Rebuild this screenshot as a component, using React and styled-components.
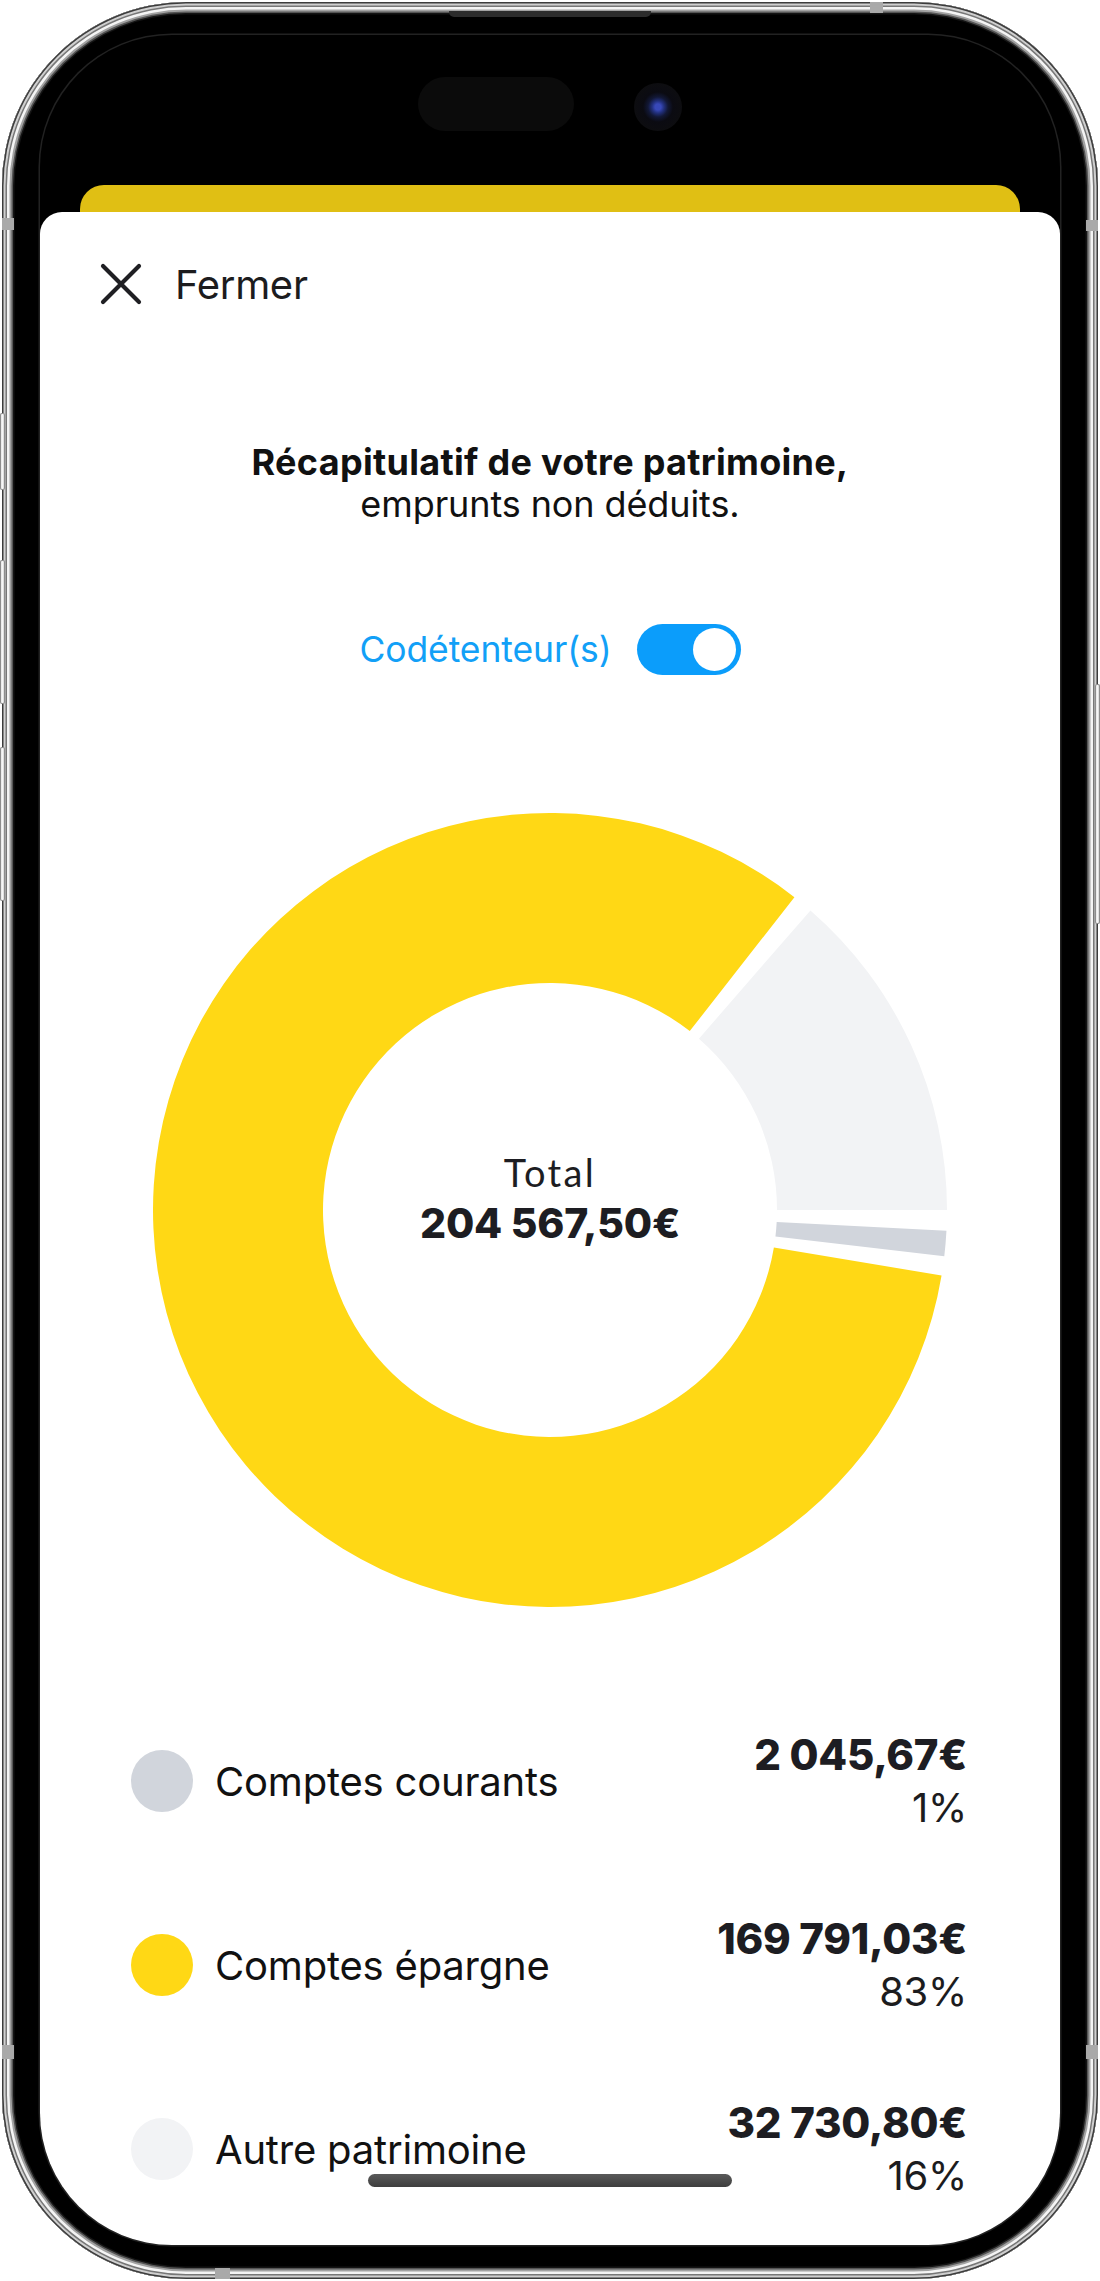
import React from 'react';
import styled, { createGlobalStyle } from 'styled-components';

const GlobalStyle = createGlobalStyle`
  html, body { margin: 0; padding: 0; background: #fff; }
  body { font-family: Inter, "Noto Sans", sans-serif; -webkit-font-smoothing: antialiased; }
  #root { width: 1100px; height: 2281px; }
`;

const Page = styled.div`
  width: 1100px;
  height: 2281px;
  padding: 2px;
  box-sizing: border-box;
  background: #fff;
`;

const Frame = styled.div`
  position: relative;
  width: 1096px;
  height: 2277px;
  box-sizing: border-box;
  border-radius: 184px;
  padding: 33px 38px 34px;
  background: #000;
  box-shadow:
    inset 0 0 0 1.5px #3c3c3c,
    inset 0 0 0 3.5px #cfcfcf,
    inset 0 0 0 5px #777,
    inset 0 0 0 7.5px #f4f4f4,
    inset 0 0 0 9.5px #a2a2a2,
    inset 0 0 0 11px #555,
    inset 0 0 0 12.5px #141414;
`;

const SideButton = styled.div`
  position: absolute;
  ${(p) => (p.$side === 'left' ? 'left: -2px;' : 'right: -2px;')}
  top: ${(p) => p.$top}px;
  width: 5px;
  height: ${(p) => p.$h}px;
  border-radius: 2px;
  background: linear-gradient(90deg, #d9d9d9, #f6f6f6 50%, #bdbdbd);
  box-shadow: inset 0 0 0 1px #8d8d8d;
`;

const AntennaMark = styled.div`
  position: absolute;
  background: #a9a9a9;
  ${(p) => p.$css}
`;

const Speaker = styled.div`
  position: absolute;
  top: 9px;
  left: 447px;
  width: 202px;
  height: 6px;
  border-radius: 0 0 5px 5px;
  background: #2c2c2c;
`;

const Screen = styled.div`
  width: 100%;
  height: 100%;
  border-radius: 132px;
  overflow: hidden;
  background: #000;
  display: flex;
  flex-direction: column;
  box-shadow: 0 0 0 1.5px #222;
`;

const StatusBar = styled.div`
  flex: none;
  height: 150px;
  box-sizing: border-box;
  padding-top: 42px;
  display: flex;
  justify-content: center;
  align-items: flex-start;
  gap: 60px;
`;

const Island = styled.div`
  width: 156px;
  height: 54px;
  border-radius: 27px;
  background: #0b0b0b;
`;

const Camera = styled.div`
  margin-top: 6px;
  width: 48px;
  height: 48px;
  border-radius: 50%;
  background: radial-gradient(circle at 50% 50%, #3848b8 0 3px, #22307e 6px, #121836 10px, #0b0b12 15px, #0d0d10 24px);
`;

const BackCard = styled.div`
  flex: none;
  height: 27px;
  margin: 0 40px;
  border-radius: 24px 24px 0 0;
  background: #e0bf14;
`;

const Sheet = styled.main`
  flex: 1;
  position: relative;
  background: #fff;
  border-radius: 22px 22px 0 0;
  display: flex;
  flex-direction: column;
  color: #1c1c1e;
`;

const Header = styled.header`
  display: flex;
  align-items: center;
  gap: 33px;
  height: 48px;
  margin-top: 48px;
  padding-left: 60px;
`;

const CloseIcon = styled.svg`
  width: 42px;
  height: 42px;
  flex: none;
`;

const CloseLabel = styled.span`
  font-size: 40px;
  letter-spacing: -0.3px;
  color: #1c1c1e;
`;

const Summary = styled.div`
  margin-top: 133px;
  text-align: center;
  font-size: 36px;
  line-height: 42px;
  color: #111;
  letter-spacing: -0.1px;
`;

const SummaryStrong = styled.strong`
  display: block;
  font-weight: 700;
  letter-spacing: 0.3px;
`;

const CoholderRow = styled.div`
  margin-top: 98px;
  height: 52px;
  display: flex;
  justify-content: center;
  align-items: center;
  gap: 25px;
`;

const CoholderLabel = styled.span`
  font-size: 35.5px;
  color: #12a0f7;
  letter-spacing: -0.1px;
`;

const Toggle = styled.div`
  width: 104px;
  height: 51px;
  box-sizing: border-box;
  border-radius: 26px;
  background: #0b9dfb;
  padding: 4px 5px;
  display: flex;
  justify-content: ${(p) => (p.$on ? 'flex-end' : 'flex-start')};
`;

const Knob = styled.div`
  width: 43px;
  height: 43px;
  border-radius: 50%;
  background: #fff;
`;

const ChartWrap = styled.div`
  margin: 138px auto 0;
  width: 794px;
  height: 794px;
  display: grid;
  place-items: center;
`;

const Donut = styled.svg`
  grid-area: 1 / 1;
  width: 794px;
  height: 794px;
`;

const ChartCenter = styled.div`
  grid-area: 1 / 1;
  display: flex;
  flex-direction: column;
  align-items: center;
  margin-bottom: 21px;
  color: #1d1d22;
`;

const TotalLabel = styled.span`
  font-family: Lato, Inter, sans-serif;
  font-size: 38px;
  line-height: 46px;
  letter-spacing: 2.4px;
`;

const TotalValue = styled.span`
  font-size: 41px;
  line-height: 56px;
  font-weight: 800;
  letter-spacing: -0.2px;
`;

const Legend = styled.ul`
  list-style: none;
  margin: 121px 0 0;
  padding: 0 93px 0 91px;
  display: flex;
  flex-direction: column;
  gap: 78px;
`;

const LegendRow = styled.li`
  display: grid;
  grid-template-columns: 62px 1fr auto;
  column-gap: 22px;
  align-items: center;
`;

const Dot = styled.span`
  width: 62px;
  height: 62px;
  border-radius: 50%;
  background: ${(p) => p.$color};
`;

const RowLabel = styled.span`
  font-size: 40px;
  letter-spacing: -0.2px;
  color: #111;
`;

const Figures = styled.div`
  display: flex;
  flex-direction: column;
  align-items: flex-end;
`;

const Amount = styled.span`
  font-weight: 800;
  font-size: 42px;
  line-height: 53px;
  letter-spacing: -0.3px;
  color: #1d1d22;
`;

const Percent = styled.span`
  font-size: 40px;
  line-height: 53px;
  color: #1c1c1e;
  letter-spacing: -0.3px;
`;

const HomeIndicator = styled.div`
  position: absolute;
  left: 50%;
  bottom: 58px;
  width: 364px;
  height: 13px;
  margin-left: -182px;
  border-radius: 7px;
  background: linear-gradient(180deg, #5a5a5a, #3e3e3e);
`;

const CX = 397;
const R_OUT = 397;
const R_IN = 227;

function sectorPath(a0, a1) {
  const rad = (d) => (d * Math.PI) / 180;
  const pt = (rr, a) => [CX + rr * Math.cos(rad(a)), CX - rr * Math.sin(rad(a))];
  const large = a1 - a0 > 180 ? 1 : 0;
  const [x0, y0] = pt(R_OUT, a0);
  const [x1, y1] = pt(R_OUT, a1);
  const [x2, y2] = pt(R_IN, a1);
  const [x3, y3] = pt(R_IN, a0);
  return `M${x0} ${y0} A${R_OUT} ${R_OUT} 0 ${large} 0 ${x1} ${y1} L${x2} ${y2} A${R_IN} ${R_IN} 0 ${large} 1 ${x3} ${y3} Z`;
}

const items = [
  { label: 'Comptes courants', amount: '2 045,67€', percent: '1%', color: '#d1d5dc', from: 353.3, to: 357 },
  { label: 'Comptes épargne', amount: '169 791,03€', percent: '83%', color: '#ffd815', from: 52, to: 350.5 },
  { label: 'Autre patrimoine', amount: '32 730,80€', percent: '16%', color: '#f2f3f5', from: 0, to: 49 },
];

export default function App() {
  return (
    <Page>
      <GlobalStyle />
      <Frame>
        <Speaker />
        <SideButton $side="left" $top={411} $h={77} />
        <SideButton $side="left" $top={558} $h={144} />
        <SideButton $side="left" $top={745} $h={154} />
        <SideButton $side="right" $top={682} $h={240} />
        <AntennaMark $css="left: 0; top: 216px; width: 12px; height: 12px;" />
        <AntennaMark $css="right: 0; top: 218px; width: 12px; height: 11px;" />
        <AntennaMark $css="left: 0; top: 2043px; width: 12px; height: 14px;" />
        <AntennaMark $css="right: 0; top: 2043px; width: 12px; height: 14px;" />
        <AntennaMark $css="top: 0; left: 868px; width: 13px; height: 11px;" />
        <AntennaMark $css="bottom: 0; left: 213px; width: 15px; height: 11px;" />
        <Screen>
          <StatusBar>
            <Island />
            <Camera />
          </StatusBar>
          <BackCard />
          <Sheet>
            <Header>
              <CloseIcon viewBox="0 0 42 42" aria-hidden="true">
                <path d="M3 3 L39 39 M39 3 L3 39" stroke="#1f1f23" strokeWidth="4.2" strokeLinecap="round" fill="none" />
              </CloseIcon>
              <CloseLabel>Fermer</CloseLabel>
            </Header>
            <Summary>
              <SummaryStrong>Récapitulatif de votre patrimoine,</SummaryStrong>
              emprunts non déduits.
            </Summary>
            <CoholderRow>
              <CoholderLabel>Codétenteur(s)</CoholderLabel>
              <Toggle $on role="switch" aria-checked="true">
                <Knob />
              </Toggle>
            </CoholderRow>
            <ChartWrap>
              <Donut viewBox="0 0 794 794">
                {items.map((it) => (
                  <path key={it.label} d={sectorPath(it.from, it.to)} fill={it.color} />
                ))}
              </Donut>
              <ChartCenter>
                <TotalLabel>Total</TotalLabel>
                <TotalValue>204 567,50€</TotalValue>
              </ChartCenter>
            </ChartWrap>
            <Legend>
              {items.map((it) => (
                <LegendRow key={it.label}>
                  <Dot $color={it.color} />
                  <RowLabel>{it.label}</RowLabel>
                  <Figures>
                    <Amount>{it.amount}</Amount>
                    <Percent>{it.percent}</Percent>
                  </Figures>
                </LegendRow>
              ))}
            </Legend>
            <HomeIndicator />
          </Sheet>
        </Screen>
      </Frame>
    </Page>
  );
}
